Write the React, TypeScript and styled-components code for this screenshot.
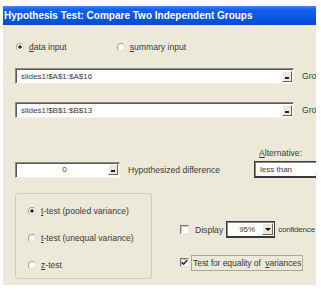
import React from 'react';
import styled, { createGlobalStyle } from 'styled-components';

const GlobalStyle = createGlobalStyle`
  body {
    margin: 0;
    background: #ffffff;
    font-family: "Liberation Sans", Arial, sans-serif;
  }
`;

const Window = styled.div`
  margin: 6px 0 0 3px;
  width: 313px;
  height: 279px;
  background: #ece9d8;
  overflow: hidden;
  display: flex;
  flex-direction: column;
`;

const TitleBar = styled.div`
  height: 19px;
  flex-shrink: 0;
  padding-left: 1px;
  line-height: 19px;
  color: #ffffff;
  font-size: 10px;
  font-weight: bold;
  white-space: nowrap;
  background: linear-gradient(to bottom, #4a8af6 0%, #1660ea 18%, #0a55e3 65%, #0848d2 100%);
`;

const Body = styled.div`
  display: flex;
  flex-direction: column;
  padding-left: 12px;
  font-size: 8.6px;
  color: #3a3a3a;
  white-space: nowrap;
  & * {
    flex-shrink: 0;
  }
`;

const Row = styled.div<{ $top: number }>`
  display: flex;
  align-items: center;
  margin-top: ${p => p.$top}px;
`;

const Option = styled.label<{ $gap?: number }>`
  display: flex;
  align-items: center;
  gap: 5px;
  height: 12px;
  margin-left: ${p => p.$gap ?? 0}px;
`;

const RadioDot = styled.span<{ $on?: boolean }>`
  width: 8px;
  height: 8px;
  box-sizing: border-box;
  border-radius: 50%;
  border: 1px solid #a0a0a0;
  border-right-color: #dcdcdc;
  border-bottom-color: #dcdcdc;
  background: ${p => (p.$on ? 'radial-gradient(circle, #333 0 1.4px, #fff 2px)' : '#fff')};
`;

const TextBox = styled.div<{ $width: number }>`
  width: ${p => p.$width}px;
  height: 16px;
  box-sizing: border-box;
  display: flex;
  align-items: center;
  background: #ffffff;
  border: 1px solid;
  border-color: #8a8a8a #f2f2f2 #f2f2f2 #8a8a8a;
  box-shadow: inset 1px 1px #5a5a5a;
  padding: 0 1px 0 5px;
  font-size: 8px;
  color: #3a3a3a;
`;

const BoxText = styled.span<{ $center?: boolean }>`
  flex: 1;
  text-align: ${p => (p.$center ? 'center' : 'left')};
`;

const RefButton = styled.span`
  width: 10px;
  height: 11px;
  box-sizing: border-box;
  background: #ece9d8;
  border: 1px solid;
  border-color: #fff #666 #666 #fff;
  display: flex;
  align-items: flex-end;
  justify-content: center;
  padding-bottom: 2px;
  &::after {
    content: '';
    width: 4px;
    height: 2px;
    background: #222;
  }
`;

const SideLabel = styled.span<{ $gap: number; $tight?: boolean }>`
  margin-left: ${p => p.$gap}px;
  ${p => (p.$tight ? 'font-size: 8px; letter-spacing: -0.2px;' : '')}
`;

const HypRow = styled.div`
  display: flex;
  align-items: flex-end;
  margin-top: 30px;
`;

const HypField = styled.div`
  display: flex;
  align-items: center;
  height: 17px;
`;

const AltColumn = styled.div`
  display: flex;
  flex-direction: column;
  margin-left: 34px;
`;

const AltLabel = styled.span`
  margin-left: 5px;
  height: 11px;
  line-height: 11px;
  margin-bottom: 2px;
`;

const Select = styled.div<{ $width: number; $gap?: number }>`
  width: ${p => p.$width}px;
  height: 17px;
  box-sizing: border-box;
  margin-left: ${p => p.$gap ?? 0}px;
  display: flex;
  align-items: center;
  background: #fff;
  border: 1px solid #3a3a3a;
  border-bottom-width: 2px;
  box-shadow: inset 1px 1px #8a8a8a;
  padding: 0 1px 0 5px;
  font-size: 8px;
  color: #3a3a3a;
`;

const DropArrow = styled.span`
  width: 11px;
  height: 12px;
  box-sizing: border-box;
  background: #ece9d8;
  border: 1px solid;
  border-color: #fff #666 #666 #fff;
  display: flex;
  align-items: center;
  justify-content: center;
  &::after {
    content: '';
    border-left: 3px solid transparent;
    border-right: 3px solid transparent;
    border-top: 3px solid #111;
  }
`;

const BottomRow = styled.div`
  display: flex;
  margin-top: 15px;
`;

const GroupBox = styled.div`
  width: 137px;
  height: 86px;
  box-sizing: border-box;
  border: 1px solid #cfcdbd;
  border-radius: 3px;
  padding: 11px 0 0 12px;
  display: flex;
  flex-direction: column;
  gap: 15px;
`;

const RightColumn = styled.div`
  display: flex;
  flex-direction: column;
  margin-left: 28px;
  padding-top: 28px;
`;

const CheckRow = styled.div<{ $top?: number }>`
  display: flex;
  align-items: center;
  height: 17px;
  margin-top: ${p => p.$top ?? 0}px;
`;

const CheckBox = styled.span`
  width: 9px;
  height: 9px;
  box-sizing: border-box;
  background: #fff;
  border: 1px solid;
  border-color: #7a7a7a #e6e6e6 #e6e6e6 #7a7a7a;
  box-shadow: inset 1px 1px #c9c9c9;
  display: flex;
  align-items: center;
  justify-content: center;
`;

const FocusLabel = styled.span`
  margin-left: 2px;
  padding: 2px 1px;
  border: 1px solid #a9a79a;
  white-space: pre;
  letter-spacing: -0.1px;
`;

const Check = () => (
  <svg width="7" height="7" viewBox="0 0 7 7">
    <path d="M0.8 3.2 L2.6 5.2 L6.2 1.2" stroke="#222" strokeWidth="1.5" fill="none" />
  </svg>
);

const App: React.FC = () => {
  return (
    <>
      <GlobalStyle />
      <Window>
        <TitleBar>Hypothesis Test: Compare Two Independent Groups</TitleBar>
        <Body>
          <Row $top={16} style={{ paddingLeft: 1 }}>
            <Option>
              <RadioDot $on />
              <span><u>d</u>ata input</span>
            </Option>
            <Option $gap={50}>
              <RadioDot />
              <span><u>s</u>ummary input</span>
            </Option>
          </Row>

          <Row $top={15}>
            <TextBox $width={279}>
              <BoxText>slides1!$A$1:$A$16</BoxText>
              <RefButton />
            </TextBox>
            <SideLabel $gap={8}>Group 1</SideLabel>
          </Row>

          <Row $top={18}>
            <TextBox $width={279}>
              <BoxText>slides1!$B$1:$B$13</BoxText>
              <RefButton />
            </TextBox>
            <SideLabel $gap={8}>Group 2</SideLabel>
          </Row>

          <HypRow>
            <HypField>
              <TextBox $width={105}>
                <BoxText $center>0</BoxText>
                <RefButton />
              </TextBox>
              <SideLabel $gap={8}>Hypothesized difference</SideLabel>
            </HypField>
            <AltColumn>
              <AltLabel><u>A</u>lternative:</AltLabel>
              <Select $width={74}>
                <BoxText>less than</BoxText>
                <DropArrow />
              </Select>
            </AltColumn>
          </HypRow>

          <BottomRow>
            <GroupBox>
              <Option>
                <RadioDot $on />
                <span><u>t</u>-test (pooled variance)</span>
              </Option>
              <Option>
                <RadioDot />
                <span><u>t</u>-test (unequal variance)</span>
              </Option>
              <Option>
                <RadioDot />
                <span><u>z</u>-test</span>
              </Option>
            </GroupBox>
            <RightColumn>
              <CheckRow>
                <CheckBox />
                <SideLabel $gap={6}>Display</SideLabel>
                <Select $width={49} $gap={3}>
                  <BoxText $center>95%</BoxText>
                  <DropArrow />
                </Select>
                <SideLabel $gap={3} $tight>confidence</SideLabel>
              </CheckRow>
              <CheckRow $top={16}>
                <CheckBox><Check /></CheckBox>
                <FocusLabel>Test for equality of  <u>v</u>ariances</FocusLabel>
              </CheckRow>
            </RightColumn>
          </BottomRow>
        </Body>
      </Window>
    </>
  );
};

export default App;
